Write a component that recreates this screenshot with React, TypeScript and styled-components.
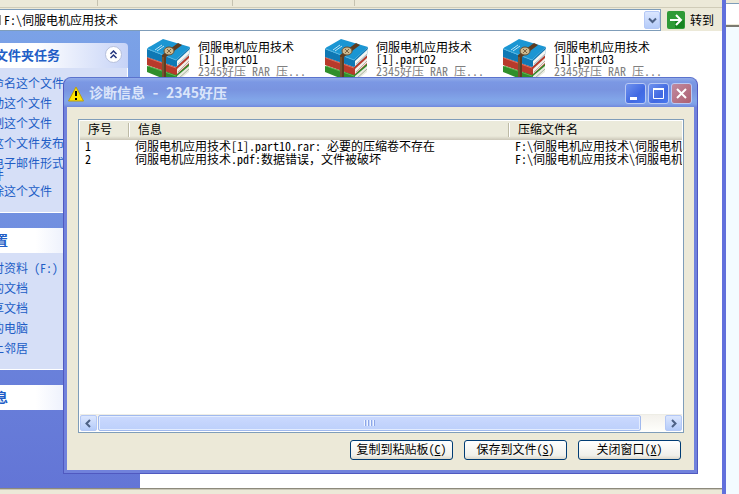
import React from 'react';
import styled, { createGlobalStyle } from 'styled-components';

const Global = createGlobalStyle`
  *, *::before, *::after { box-sizing: border-box; }
  body {
    margin: 0;
    overflow: hidden;
    background: #f3fbff;
    color: #000;
    font: 12px/12px "Noto Sans CJK SC", sans-serif;
    font-feature-settings: "hwid";
  }
  button, input { font: inherit; font-feature-settings: inherit; color: inherit; margin: 0; padding: 0; }
`;

const Desktop = styled.div`
  position: relative;
  display: flex;
  height: 100vh;
  overflow: hidden;
`;

const Explorer = styled.main`
  flex: 1;
  min-width: 0;
  display: flex;
  flex-direction: column;
  border-right: 4px solid #6070dc;
  background: #ece9d8;
`;

const Toolbar = styled.div`
  display: flex;
  height: 8px;
  flex: none;
  border-bottom: 1px solid #d0ccb8;
`;

const ToolGroup = styled.div<{ $w: number }>`
  width: ${p => p.$w}px;
  height: 6px;
  border-right: 1px solid #c5c2b0;
`;

const AddressBar = styled.form`
  display: flex;
  flex: none;
  height: 23px;
  padding-top: 1px;
`;

const AddressField = styled.div`
  flex: 1;
  display: flex;
  align-items: center;
  border: 1px solid #7f9db9;
  border-left: 0;
  background: #fff;
`;

const FolderStub = styled.span`
  width: 1px;
  height: 10px;
  background: #999;
`;

const AddressInput = styled.input`
  flex: 1;
  min-width: 0;
  height: 18px;
  padding: 0 0 2px 3px;
  border: 0;
  outline: 0;
  background: transparent;
`;

const DropButton = styled.button`
  display: grid;
  place-items: center;
  width: 16px;
  height: 18px;
  border: 1px solid #b4c8f6;
  border-radius: 2px;
  background: linear-gradient(#dbe6fe, #b4cbf9);
`;

const GoButton = styled.button`
  display: flex;
  align-items: center;
  gap: 5px;
  width: 61px;
  padding-left: 6px;
  border: 0;
  background: transparent;
`;

const Body = styled.div`
  flex: 1;
  min-height: 0;
  display: flex;
  background: #fff;
`;

const Sidebar = styled.aside`
  display: flex;
  flex-direction: column;
  gap: 15px;
  flex: none;
  width: 209px;
  margin-left: -69px;
  padding: 12px;
  background: linear-gradient(#7ba2e7, #6375d6);
`;

const PanelHead = styled.h2`
  display: flex;
  align-items: center;
  justify-content: space-between;
  height: 25px;
  margin: 0;
  padding: 0 6px 2px 13px;
  border-radius: 4px 4px 0 0;
  background: linear-gradient(90deg, #fff 50%, #c6d3f7);
  color: #215dc6;
  font-size: 13px;
  line-height: 13px;
`;

const Collapse = styled.button`
  display: grid;
  place-items: center;
  width: 17px;
  height: 17px;
  border: 1px solid #b5bfdc;
  border-radius: 50%;
  background: #fff;
`;

const PanelBody = styled.ul`
  margin: 0;
  padding: 6px 4px 10px 36px;
  border: 1px solid #fff;
  border-top: 0;
  background: #d6dff7;
  list-style: none;
`;

const Task = styled.li<{ $tall?: boolean }>`
  height: ${p => (p.$tall ? 28 : 20)}px;
  padding-top: 3px;
  white-space: pre-line;

  a { color: #215dc6; text-decoration: none; }
`;

const Files = styled.section`
  flex: 1;
  min-width: 0;
  display: grid;
  grid-template-columns: repeat(auto-fill, 178px);
  align-content: start;
  padding-top: 6px;
`;

const FileTile = styled.figure`
  display: flex;
  gap: 5px;
  margin: 0;
  padding: 0 10px 0 5px;
`;

const FileText = styled.figcaption`
  padding-top: 4px;
  white-space: pre-line;

  small { color: #808080; font-size: 12px; }
`;

const StatusBar = styled.footer`
  flex: none;
  height: 6px;
  border-top: 1px solid #8d8a7c;
  box-shadow: inset 0 1px #c9c6b7;
`;

const BackWindow = styled.div`
  width: 13px;
  height: 27px;
  border-bottom: 2px solid #7b7a70;
  background: #ece9d8;
  padding-top: 3px;
`;

const BackField = styled.div`
  height: 21px;
  border-top: 1px solid #7f9db9;
  background: #fff;
`;

const Dialog = styled.section`
  position: absolute;
  inset: 77px 41px 20px 63px;
  display: flex;
  flex-direction: column;
  border: 1px solid #5059c0;
  border-top-color: #5b73cd;
  border-radius: 8px 8px 0 0;
  background: #7182dc;
  padding: 0 3px 3px;
`;

const TitleBar = styled.header`
  display: flex;
  align-items: center;
  gap: 2px;
  flex: none;
  height: 29px;
  margin: 0 -3px;
  padding: 2px 5px 0 4px;
  border-radius: 7px 7px 0 0;
  background: linear-gradient(#92ace9 0, #7b98e4 4px, #7994e0 12px, #82a6e9 22px, #7fa0e7 26px, #7088dc);
  color: #dbe5fa;
`;

const Title = styled.h1`
  flex: 1;
  margin: 0;
  padding: 0 0 3px 3px;
  font-size: 14px;
  line-height: 16px;
`;

const Proportional = styled.span`
  font-feature-settings: normal;
`;

const WinButton = styled.button<{ $close?: boolean }>`
  display: grid;
  place-items: center;
  width: 21px;
  height: 21px;
  border: 1px solid #b9c9f4;
  border-radius: 3px;
  background: ${p => (p.$close
    ? 'linear-gradient(135deg, #c08aa0, #ae6070)'
    : 'linear-gradient(135deg, #6f92ee, #4169e2 60%, #4878ee)')};
`;

const DialogBody = styled.div`
  flex: 1;
  min-height: 0;
  display: flex;
  flex-direction: column;
  gap: 7px;
  padding: 12px 10px 10px 11px;
  background: #ece9d8;
`;

const List = styled.div`
  flex: 1;
  min-height: 0;
  display: flex;
  flex-direction: column;
  justify-content: space-between;
  border: 1px solid #7f9db9;
  padding: 1px;
  background: #fff;
`;

const Table = styled.table`
  width: 100%;
  table-layout: fixed;
  border-collapse: collapse;

  td {
    height: 13px;
    padding: 0 0 1px 7px;
    overflow: hidden;
    white-space: nowrap;
    vertical-align: top;
  }
  td:first-child { padding-left: 5px; }
`;

const HeadCell = styled.th<{ $w?: number }>`
  width: ${p => (p.$w ? `${p.$w}px` : 'auto')};
  height: 19px;
  padding: 0 0 2px;
  background: linear-gradient(#ebeadb 15px, #cbc7b8);
  font-weight: 400;
  text-align: left;
`;

const HeadLabel = styled.span<{ $first: boolean }>`
  display: block;
  height: 14px;
  padding-left: ${p => (p.$first ? 8 : 9)}px;
  border-left: ${p => (p.$first ? '0' : '1px solid #bdbaa5')};
  box-shadow: ${p => (p.$first ? 'none' : 'inset 1px 0 #fff')};
`;

const ScrollBar = styled.div`
  display: flex;
  flex: none;
  height: 17px;
  border-top: 1px solid #eeede5;
  background: linear-gradient(#f3f1ec, #fefefb);
`;

const Track = styled.div`
  flex: 1;
  margin: 0 1px;
`;

const Thumb = styled.div`
  display: flex;
  align-items: center;
  justify-content: center;
  gap: 1px;
  width: 96%;
  height: 16px;
  border: 1px solid #a0b9ee;
  border-radius: 2px;
  box-shadow: inset 0 0 0 1px #e4edff;
  background: linear-gradient(#cbd9fe, #bdd0fb);

  i { width: 1px; height: 6px; background: #8ca6e8; box-shadow: -1px 0 #eef4fe; margin-left: 1px; }
`;

const ScrollButton = styled(DropButton)`
  width: 17px;
  height: 16px;
`;

const Actions = styled.div`
  display: flex;
  justify-content: flex-end;
  gap: 11px;
  padding-right: 3px;
`;

const Action = styled.button`
  width: 103px;
  height: 20px;
  padding-bottom: 2px;
  border: 1px solid #003c74;
  border-radius: 3px;
  background: linear-gradient(#fff, #f0f0ea 80%, #dcd8cc);
  line-height: 16px;
  white-space: nowrap;
`;

const Chevron = ({ d }: { d: string }) => (
  <svg width="9" height="9" viewBox="0 0 9 9" fill="none" stroke="#4d6185" strokeWidth="2"><path d={d} /></svg>
);

const Books = () => (
  <svg width="48" height="44" viewBox="0 0 48 44">
    <path d="M2 29 31 37 44 26 44 33 31 44H24L2 35Z" fill="#2f8f2b" />
    <path d="M32 39 44 29 44 35 33 44H31Z" fill="#e9ebe0" />
    <path d="M3 29 31 39" stroke="#5fb552" />
    <path d="M33 42 44 32" stroke="#a9b5a1" />
    <path d="M2 20 31 30 44 18 44 27 31 38 2 28Z" fill="#b83a2b" />
    <path d="M32 32 44 21 44 26 32 37Z" fill="#f3efe8" />
    <path d="M3 21 31 31" stroke="#e0705c" />
    <path d="M33 35 44 24" stroke="#b9afa7" />
    <path d="M2 12 31 23 45 10 44 18 31 30 2 20Z" fill="#0f78b4" />
    <path d="M32 24 45 12 44 18 32 29Z" fill="#f6f6f3" />
    <path d="M33 27 44 17" stroke="#b5bcc0" />
    <path d="M2 12Q3 10 6 9L18 2 45 10 31 23Z" fill="#1b96d3" />
    <path d="M3 12 31 23" stroke="#54b6e2" />
    <path d="M10 13 17 8M12 14 19 9" stroke="#bfe4f5" />
    <path d="M33 6 37 8 21 20V44H17V18Z" fill="#5e3c21" />
    <path d="M18 20V43" stroke="#926a40" />
    <ellipse cx="24" cy="14" rx="5" ry="4" fill="#cdb98f" stroke="#6b5030" />
    <path d="m22 12 4 4M22 16 26 12" stroke="#7b6140" />
  </svg>
);

const tasks = ['重命名这个文件', '移动这个文件', '复制这个文件', '将这个文件发布到 Web', '以电子邮件形式发送\n此件', '删除这个文件'];
const places = ['临时资料 (F:)', '我的文档', '共享文档', '我的电脑', '网上邻居'];
const columns = [{ label: '序号', w: 48 }, { label: '信息', w: 380 }, { label: '压缩文件名' }];
const actions = [['复制到粘贴板', 'C'], ['保存到文件', 'S'], ['关闭窗口', 'X']];
const rows = [
  { id: '1', text: <>伺服电机应用技术[1].part10.rar: 必要的压缩卷不存在</> },
  { id: '2', text: <>伺服电机应用技术.pdf:数据错误<Proportional>，</Proportional>文件被破坏</> },
];

const TaskList = ({ items }: { items: string[] }) => (
  <PanelBody>
    {items.map(t => <Task key={t} $tall={t.includes('\n')}><a href="#">{t}</a></Task>)}
  </PanelBody>
);

export default function App() {
  return (
    <Desktop lang="zh-CN">
      <Global />
      <Explorer>
        <Toolbar><ToolGroup $w={98} /><ToolGroup $w={135} /><ToolGroup $w={122} /></Toolbar>
        <AddressBar>
          <AddressField>
            <FolderStub />
            <AddressInput aria-label="地址" defaultValue="F:\伺服电机应用技术" />
            <DropButton type="button" aria-label="展开地址"><Chevron d="M1 2.5 4.5 6 8 2.5" /></DropButton>
          </AddressField>
          <GoButton type="button">
            <svg width="18" height="18" viewBox="0 0 18 18">
              <rect width="18" height="18" rx="2" fill="#2f9a37" />
              <rect x="8" y="9" width="9" height="8" fill="#178321" />
              <path d="M3 9H14M9 4 14 9 9 14" fill="none" stroke="#fff" strokeWidth="2" />
            </svg>
            转到
          </GoButton>
        </AddressBar>
        <Body>
          <Sidebar>
            <div>
              <PanelHead>
                文件和文件夹任务
                <Collapse aria-label="折叠">
                  <svg width="9" height="9" viewBox="0 0 9 9" fill="none" stroke="#25377f" strokeWidth="1.5"><path d="M1.500 4 4.500 1 7.500 4M1.500 8 4.500 5 7.500 8" /></svg>
                </Collapse>
              </PanelHead>
              <TaskList items={tasks} />
            </div>
            <div>
              <PanelHead>其它位置</PanelHead>
              <TaskList items={places} />
            </div>
            <PanelHead>详细信息</PanelHead>
          </Sidebar>
          <Files>
            {['01', '02', '03'].map(n => (
              <FileTile key={n}>
                <Books />
                <FileText>
                  {`伺服电机应用技术\n[1].part${n}\n`}
                  <small>2345好压 RAR 压...</small>
                </FileText>
              </FileTile>
            ))}
          </Files>
        </Body>
        <StatusBar />
      </Explorer>
      <BackWindow><BackField /></BackWindow>

      <Dialog role="dialog" aria-labelledby="dialog-title">
        <TitleBar>
          <svg width="16" height="16" viewBox="0 0 16 16">
            <path d="M8 1 15.500 15H.5Z" fill="#ffe600" stroke="#b89c10" strokeLinejoin="round" />
            <path d="M8 5V10M8 12V14" stroke="#000" strokeWidth="2" />
          </svg>
          <Title id="dialog-title">诊断信息 - <Proportional>2345</Proportional>好压</Title>
          <WinButton aria-label="最小化"><svg width="15" height="15"><rect x="2" y="11" width="7" height="3" fill="#fff" /></svg></WinButton>
          <WinButton aria-label="最大化"><svg width="15" height="15"><path d="M2.500 3V12.500H12.500V3M2 3.500H13" fill="none" stroke="#fff" /><path d="M2 3H13" stroke="#fff" strokeWidth="2" /></svg></WinButton>
          <WinButton $close aria-label="关闭"><svg width="15" height="15"><path d="m3 3 9 9M12 3 3 12" stroke="#fff" strokeWidth="2" /></svg></WinButton>
        </TitleBar>
        <DialogBody>
          <List>
            <Table>
              <thead>
                <tr>
                  {columns.map((c, i) => (
                    <HeadCell key={c.label} $w={c.w}><HeadLabel $first={i === 0}>{c.label}</HeadLabel></HeadCell>
                  ))}
                </tr>
              </thead>
              <tbody>
                {rows.map(r => (
                  <tr key={r.id}><td>{r.id}</td><td>{r.text}</td><td>F:\伺服电机应用技术\伺服电机应用技术</td></tr>
                ))}
              </tbody>
            </Table>
            <ScrollBar>
              <ScrollButton aria-label="向左滚动"><Chevron d="M6 1 2.500 4.500 6 8" /></ScrollButton>
              <Track><Thumb><i /><i /><i /><i /></Thumb></Track>
              <ScrollButton aria-label="向右滚动"><Chevron d="M3 1 6.500 4.500 3 8" /></ScrollButton>
            </ScrollBar>
          </List>
          <Actions>
            {actions.map(([label, k]) => <Action key={k}>{label}(<u>{k}</u>)</Action>)}
          </Actions>
        </DialogBody>
      </Dialog>
    </Desktop>
  );
}
